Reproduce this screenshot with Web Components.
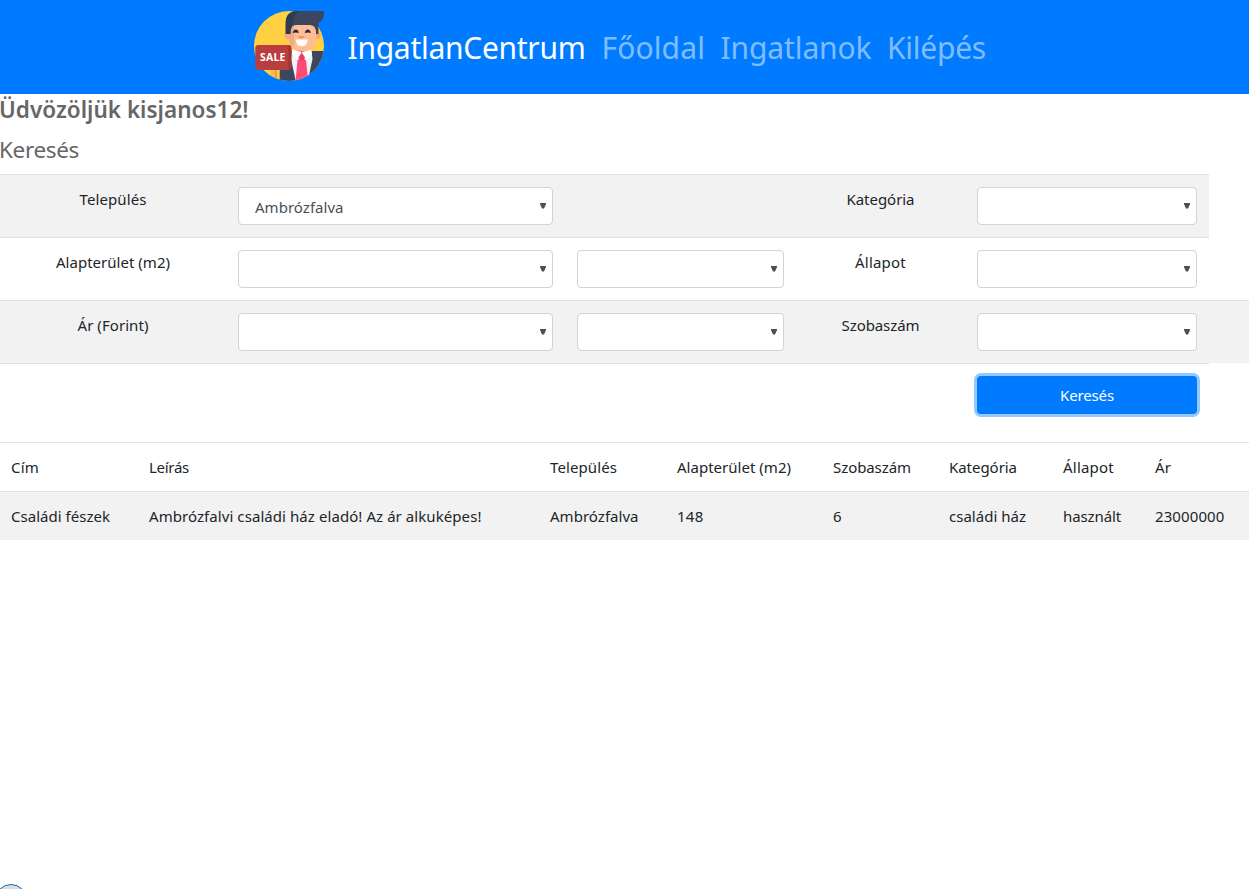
<!DOCTYPE html>
<html lang="hu">
<head>
<meta charset="utf-8">
<title>IngatlanCentrum</title>
<style>
body{margin:0;background:#fff;color:#212529;font:15px/24px "Noto Sans","Open Sans",sans-serif;overflow:hidden}
</style>
</head>
<body>
<estate-app></estate-app>
<script>
/* Text whose tracking is adjusted so that it fills a given width. */
class FitText extends HTMLElement{
  constructor(){
    super();
    this.attachShadow({mode:'open'}).innerHTML='<style>:host{display:inline-block;white-space:nowrap;vertical-align:top}span{display:inline-block}</style><span><slot></slot></span>';
  }
  connectedCallback(){
    const w=+this.getAttribute('w');
    this.style.width=w+'px';
    const fit=()=>{
      const s=this.shadowRoot.querySelector('span');
      s.style.letterSpacing='0';
      s.style.letterSpacing=(w-s.getBoundingClientRect().width)/this.textContent.length+'px';
    };
    fit();
    requestAnimationFrame(fit);
  }
}
customElements.define('fit-text',FitText);

const define=(name,html)=>customElements.define(name,class extends HTMLElement{
  constructor(){super();this.attachShadow({mode:'open'}).innerHTML=html;}
});

define('agent-logo',`<style>:host{display:block;width:72px;height:72px}svg{display:block}text{font:700 10.500px "Open Sans",sans-serif}</style>
<svg width="72" height="72" viewBox="0 0 72 72">
<defs><clipPath id="c"><circle cx="36" cy="36" r="35"/></clipPath></defs>
<circle cx="36" cy="36" r="35" fill="#ffd041"/>
<g clip-path="url(#c)">
<path d="M17.700 58H22v14h-4.300z" fill="#ffb657"/><path d="M22 58h2v14h-2z" fill="#e89f43"/>
<path d="M26.700 72V41H72v31z" fill="#3c465f"/>
<path d="M39 40h19.500l1 9-5 23H43l-5-23z" fill="#f2f2f5"/>
<path d="M42 35h14v6l-7 3-7-3z" fill="#e99c75"/>
<path d="M44.500 50l4.200-2 4.200 2 2.600 22H42.500z" fill="#ff4b78"/>
<path d="M48.700 41l4.700 5-3.400 4.500h-2.600L44 46z" fill="#e83b65"/>
<path d="M40 39.500l8.700 3-5 7.500-5-6zM57.500 39.500l-8.800 3 5 7.500 5.300-6z" fill="#fff"/>
</g>
<circle cx="35" cy="25.500" r="3.500" fill="#f2a77e"/><circle cx="64" cy="25.500" r="3.500" fill="#f2a77e"/>
<path d="M36 14h27v15q0 12-13.500 12T36 29z" fill="#ffbd94"/>
<path d="M36 15h5v22q-5-3-5-9z" fill="#f2aa80"/>
<path d="M32.700 24V13Q32.700 1 45 1h26q.5 9-5.500 12v11H63v-3q-1-6-6-6H43q-5 0-5.500 6v3z" fill="#3c465f"/>
<path d="M32.700 24V13Q32.700 1 45 1h2q-6.500 3-7 10l-2.500 10v3z" fill="#303a52"/>
<path d="M39.800 23q.5-3.500 3-3.500t3 3.500q-3-1-6 0zM51.800 23q.5-3.500 3-3.500t3 3.500q-3-1-6 0z" fill="#242c42"/>
<path d="M45.500 26h6q0 2.500-3 2.500t-3-2.500z" fill="#e9956f"/>
<path d="M42.700 29.500h12q-.5 6.800-6 6.800t-6-6.800z" fill="#fff"/>
<rect x="2.300" y="35" width="36" height="25" rx="3" fill="#b83f3d"/>
<path d="M35.300 35q3 0 3 3v19q0 3-3 3z" fill="#a53438"/>
<text x="7" y="51" fill="#fff" textLength="25.500" lengthAdjust="spacing">SALE</text>
</svg>`);

define('site-nav',`<style>
:host{display:flex;box-sizing:border-box;height:94px;background:#007bff;padding:10px 0 0 253px;color:#80bdff;font-size:30px;line-height:76px}
.links{display:flex;gap:15.500px;margin-left:22.500px}
.brand{color:#fff;margin-right:.5px}
</style><agent-logo></agent-logo>
<div class="links"><fit-text class="brand" w="238">IngatlanCentrum</fit-text><fit-text w="103.5">Főoldal</fit-text><fit-text w="151">Ingatlanok</fit-text><fit-text w="99">Kilépés</fit-text></div>`);

define('select-box',`<style>
:host{display:flex;justify-content:space-between;box-sizing:border-box;height:38px;border:1px solid #ced4da;border-radius:4px;background:#fff;padding:7px 6px 0 16px;color:#495057}
svg{display:block;margin-top:8px;flex:none}
</style><div><slot></slot></div><svg width="6" height="6" viewBox="0 0 6 6"><path d="M0 0h6v1L4 5.500H2L0 1z" fill="#495057"/></svg>`);

define('action-button',`<style>
:host{display:block;box-sizing:border-box;height:38px;background:#007bff;border-radius:4px;color:#fff;text-align:center;line-height:38px;box-shadow:0 0 0 3px #94c8ff}
</style><slot></slot>`);

define('search-row',`<style>
:host{display:grid;grid-template-columns:226px 339px 231px 169px 244px;box-sizing:border-box;width:1209px;height:63px;border-top:1px solid #dee2e6}
:host([shaded]){background:#f2f2f2}
:host([wide]){width:1249px}
div{padding:12px 12px 0}
.label{text-align:center}
</style><div class="label"><slot name="a"></slot></div><div><slot name="b"></slot></div><div><slot name="c"></slot></div><div class="label"><slot name="d"></slot></div><div><slot name="e"></slot></div>`);

define('result-row',`<style>
:host{display:grid;grid-template-columns:138px 401px 127px 156px 116px 114px 92px 1fr;box-sizing:border-box;height:49px;border-top:1px solid #dee2e6;padding:12px 0 0 11px}
:host([shaded]){background:#f2f2f2}
</style><slot></slot>`);

define('corner-orb',`<style>
:host{position:fixed;left:-5px;top:884px;box-sizing:border-box;width:32px;height:32px;border:1px solid #28608f;border-radius:50%;background:linear-gradient(#d5e2ec,#a9c3d8)}
</style>`);

define('estate-app',`<style>
:host{display:block;width:1249px;height:889px;overflow:hidden}
h4{margin:0 0 0 -1px;color:#666;font-size:22.500px;line-height:29px;font-weight:400}
.hello{font-weight:600;padding-top:1px}
.find{padding:11px 0 10px}
.results{margin-top:16px}
</style>
<site-nav></site-nav>
<h4 class="hello"><fit-text w="249.5">Üdvözöljük kisjanos12!</fit-text></h4>
<h4 class="find"><fit-text w="80">Keresés</fit-text></h4>
<search-row shaded><fit-text slot="a" w="67">Település</fit-text><select-box slot="b"><fit-text w="88.5">Ambrózfalva</fit-text></select-box><fit-text slot="d" w="68">Kategória</fit-text><select-box slot="e"></select-box></search-row>
<search-row><fit-text slot="a" w="114">Alapterület (m2)</fit-text><select-box slot="b"></select-box><select-box slot="c"></select-box><fit-text slot="d" w="51">Állapot</fit-text><select-box slot="e"></select-box></search-row>
<search-row shaded wide><fit-text slot="a" w="71">Ár (Forint)</fit-text><select-box slot="b"></select-box><select-box slot="c"></select-box><fit-text slot="d" w="78">Szobaszám</fit-text><select-box slot="e"></select-box></search-row>
<search-row><action-button slot="e"><fit-text w="54">Keresés</fit-text></action-button></search-row>
<div class="results">
<result-row><fit-text w="28">Cím</fit-text><fit-text w="40">Leírás</fit-text><fit-text w="67">Település</fit-text><fit-text w="114">Alapterület (m2)</fit-text><fit-text w="78">Szobaszám</fit-text><fit-text w="68">Kategória</fit-text><fit-text w="51">Állapot</fit-text><fit-text w="16">Ár</fit-text></result-row>
<result-row shaded><fit-text w="99">Családi fészek</fit-text><fit-text w="332.5">Ambrózfalvi családi ház eladó! Az ár alkuképes!</fit-text><fit-text w="88.5">Ambrózfalva</fit-text><fit-text w="26.5">148</fit-text><fit-text w="9">6</fit-text><fit-text w="77">családi ház</fit-text><fit-text w="58">használt</fit-text><fit-text w="69.5">23000000</fit-text></result-row>
</div>
<corner-orb></corner-orb>`);
</script>
</body>
</html>
